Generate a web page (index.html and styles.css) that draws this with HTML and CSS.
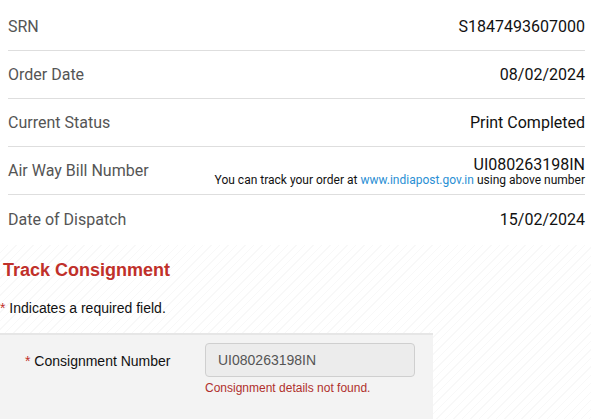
FILE: index.html
```html
<!DOCTYPE html>
<html lang="en">
  <head>
    <meta charset="UTF-8" />
    <meta name="viewport" content="width=device-width, initial-scale=1.0" />
    <title>Order Details</title>
    <link rel="stylesheet" href="styles.css">
  </head>
  <body>
    <div class="details">
      <div class="detail-row">
        <span class="detail-label">SRN</span>
        <span class="detail-value">S1847493607000</span>
      </div>
      <div class="detail-row">
        <span class="detail-label">Order Date</span>
        <span class="detail-value">08/02/2024</span>
      </div>
      <div class="detail-row">
        <span class="detail-label">Current Status</span>
        <span class="detail-value">Print Completed</span>
      </div>
      <div class="detail-row">
        <span class="detail-label">Air Way Bill Number</span>
        <div class="detail-value">
          UI080263198IN
          <div class="detail-note">
            You can track your order at
            <a href="#" class="track-link">www.indiapost.gov.in</a>
            using above number
          </div>
        </div>
      </div>
      <div class="detail-row">
        <span class="detail-label">Date of Dispatch</span>
        <span class="detail-value">15/02/2024</span>
      </div>
    </div>

    <div class="track-section">
      <h2 class="track-title">Track Consignment</h2>
      <p class="required-note"><span class="req">*</span> Indicates a required field.</p>

      <form class="track-form">
        <div class="form-row">
          <label class="form-label" for="consignment"><span class="req">*</span> Consignment Number</label>
          <div class="form-field">
            <input type="text" id="consignment" value="UI080263198IN" readonly />
            <div class="field-error">Consignment details not found.</div>
          </div>
        </div>
      </form>
    </div>
  </body>
</html>
```

FILE: styles.css
```css
* {
  margin: 0;
  padding: 0;
  box-sizing: border-box;
}

body {
  background: #fff;
  font-family: "Liberation Sans", Arial, sans-serif;
  overflow: hidden;
}

.details {
  margin: 3px 6px 0 8px;
  font-family: Roboto, "Liberation Sans", sans-serif;
}

.detail-row {
  display: flex;
  justify-content: space-between;
  align-items: center;
  height: 48px;
  border-bottom: 1px solid #dedede;
}

.detail-row:last-child {
  border-bottom: none;
}

.detail-label {
  font-size: 16px;
  color: #555;
}

.detail-value {
  font-size: 16px;
  color: #111;
  text-align: right;
  line-height: 19px;
}

.detail-note {
  font-size: 12px;
  line-height: 13px;
  color: #111;
}

.track-link {
  color: #2a8fd4;
  text-decoration: none;
}

.track-section {
  margin-top: 2px;
  height: 180px;
  background: repeating-linear-gradient(
    -45deg,
    #fff 0,
    #fff 5px,
    #f8f8f8 5px,
    #f8f8f8 6px
  );
}

.track-title {
  font-size: 18px;
  font-weight: 700;
  color: #c0302a;
  padding: 14px 0 0 3px;
  line-height: 22px;
}

.req {
  color: #c0302a;
}

.required-note {
  font-size: 14px;
  color: #111;
  margin-top: 18px;
  line-height: 18px;
}

.track-form {
  margin-top: 16px;
  width: 433px;
  background: #f3f3f3;
  border-top: 2px solid #e6e6e6;
  padding: 8px 0 30px 25px;
}

.form-row {
  display: flex;
  gap: 32px;
}

.form-label {
  font-size: 14px;
  color: #111;
  width: 148px;
  padding-top: 10px;
}

.form-field input {
  width: 210px;
  height: 34px;
  padding: 0 12px;
  font-family: "Liberation Sans", Arial, sans-serif;
  font-size: 14px;
  color: #555;
  background: #ececec;
  border: 1px solid #cfcfcf;
  border-radius: 4px;
  outline: none;
}

.field-error {
  font-size: 12px;
  color: #b0302c;
  margin-top: 4px;
}
```
